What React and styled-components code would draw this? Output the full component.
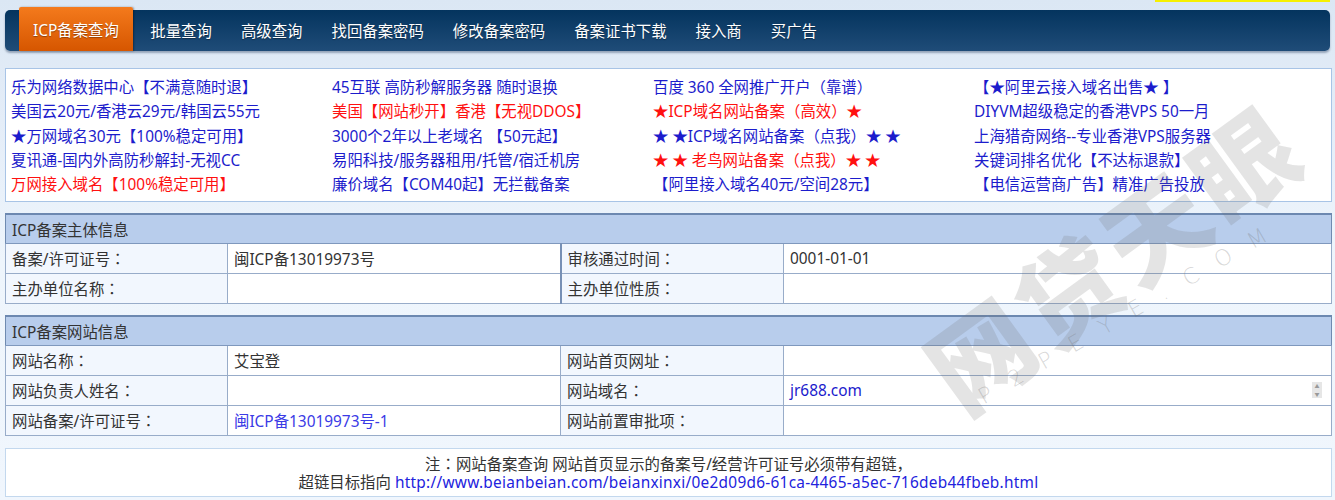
import React from 'react';
import styled, { createGlobalStyle } from 'styled-components';

const GlobalStyle = createGlobalStyle`
  html, body {
    margin: 0;
    padding: 0;
  }
  body {
    background: linear-gradient(#dbe7f4 0px, #e4edf8 120px, #eef5fc 260px, #f0f6fd 100%);
    font-family: "Noto Sans", "Noto Sans CJK SC", sans-serif;
    font-size: 15.4px;
    color: #333;
  }
`;

const Page = styled.div`
  position: relative;
  padding: 0 3px 5px 5px;
  height: 500px;
  box-sizing: border-box;
  overflow: hidden;
`;

const TopStrip = styled.div`
  height: 2px;
  display: flex;
  justify-content: flex-end;
  padding-right: 2px;
  & > span {
    width: 175px;
    background: #f6f000;
  }
`;

const NavBar = styled.nav`
  margin-top: 8px;
  height: 41px;
  margin-right: 2px;
  border-radius: 5px;
  background: linear-gradient(#04345e, #1f4c78);
  box-shadow: 0 2px 2px rgba(60, 80, 110, 0.45);
  display: flex;
  align-items: stretch;
  padding-left: 14px;
`;

const NavItem = styled.a`
  display: flex;
  align-items: center;
  padding: 0 14.5px;
  color: #fff;
  font-size: 15.4px;
  text-decoration: none;
  white-space: nowrap;
  text-shadow: 0 1px 1px rgba(0, 0, 0, 0.35);
  ${({ $active }) =>
    $active &&
    `
    margin-top: -3px;
    padding: 0 14px;
    background: linear-gradient(#f47a1c, #d65600);
    border-radius: 2px 2px 0 0;
    box-shadow: 1px 0 2px rgba(0,0,0,0.35);
    margin-right: 3px;
  `}
`;

const AdBox = styled.div`
  margin-top: 17px;
  background: #fff;
  border: 1px solid #a8c4e6;
  padding: 7px 0 4px 5px;
  display: grid;
  grid-template-columns: repeat(4, 321px);
  grid-auto-flow: column;
  grid-template-rows: repeat(5, 24.3px);
`;

const AdLink = styled.a`
  color: ${({ $red }) => ($red ? '#ff1010' : '#1c1ccc')};
  text-decoration: none;
  font-size: 15.4px;
  line-height: 24.3px;
  white-space: nowrap;
`;

const InfoTable = styled.table`
  width: 100%;
  border-collapse: collapse;
  margin-top: ${({ $gap }) => $gap}px;
  background: #fff;
  border: 1px solid #6f8ab0;
  table-layout: fixed;
`;

const HeadCell = styled.th`
  background: #b8cdec;
  text-align: left;
  font-weight: normal;
  height: 28px;
  padding: 0 6px;
  color: #333;
  border-top: 2px solid #6c88b0;
  border-bottom: 1px solid #7f98bd;
`;

const LabelCell = styled.td`
  background: #f2f7fe;
  height: 29px;
  padding: 0 6px;
  border: 1px solid #98acc9;
  border-left: ${({ $strong }) => ($strong ? '2px solid #7790b5' : '1px solid #98acc9')};
  color: #333;
  white-space: nowrap;
`;

const ValueCell = styled.td`
  background: #fff;
  height: 29px;
  padding: 0 6px;
  border: 1px solid #98acc9;
  color: #333;
  white-space: nowrap;
  position: relative;
`;

const Colon = styled.span`
  font-family: "Noto Sans CJK TC", sans-serif;
  line-height: 1;
`;

const BlueText = styled.span`
  color: ${({ $dark }) => ($dark ? '#1a1acc' : '#3b3be6')};
`;

const Spinner = styled.span`
  position: absolute;
  right: 9px;
  top: 6px;
  width: 10px;
  height: 16px;
  background: #e6e6e6;
  font-size: 5px;
  line-height: 8px;
  text-align: center;
  color: #999;
`;

const NoteBox = styled.div`
  margin-top: 12px;
  background: #fff;
  border: 1px solid #c3d8ee;
  text-align: center;
  padding: 7px 0 4px;
  line-height: 18px;
  font-size: 15.4px;
  color: #333;
`;

const NoteLink = styled.a`
  color: #2222dd;
  text-decoration: none;
  letter-spacing: 0.27px;
`;

const Watermark = styled.div`
  position: absolute;
  left: ${({ $x }) => $x}px;
  top: ${({ $y }) => $y}px;
  transform: translate(-50%, -50%) rotate(${({ $deg }) => $deg}deg);
  white-space: nowrap;
  pointer-events: none;
  line-height: 1;
  color: rgba(110, 110, 110, 0.19);
`;

const MarkBig = styled.span`
  font-family: "Noto Sans CJK SC", sans-serif;
  font-weight: 900;
  font-size: 102px;
  letter-spacing: 6px;
`;

const MarkSmall = styled.span`
  font-family: "DejaVu Sans", sans-serif;
  font-weight: 200;
  font-size: 22px;
  letter-spacing: 21px;
  color: rgba(110, 110, 110, 0.27);
`;

const navItems = ['ICP备案查询', '批量查询', '高级查询', '找回备案密码', '修改备案密码', '备案证书下载', '接入商', '买广告'];

const ads = [
  ['乐为网络数据中心【不满意随时退】', false],
  ['美国云20元/香港云29元/韩国云55元', false],
  ['★万网域名30元【100%稳定可用】', false],
  ['夏讯通-国内外高防秒解封-无视CC', false],
  ['万网接入域名【100%稳定可用】', true],
  ['45互联 高防秒解服务器 随时退换', false],
  ['美国【网站秒开】香港【无视DDOS】', true],
  ['3000个2年以上老域名 【50元起】', false],
  ['易阳科技/服务器租用/托管/宿迁机房', false],
  ['廉价域名【COM40起】无拦截备案', false],
  ['百度 360 全网推广开户（靠谱）', false],
  ['★ICP域名网站备案（高效）★', true],
  ['★ ★ICP域名网站备案（点我）★ ★', false],
  ['★ ★ 老鸟网站备案（点我）★ ★', true],
  ['【阿里接入域名40元/空间28元】', false],
  ['【★阿里云接入域名出售★ 】', false],
  ['DIYVM超级稳定的香港VPS 50一月', false],
  ['上海猎奇网络--专业香港VPS服务器', false],
  ['关键词排名优化【不达标退款】', false],
  ['【电信运营商广告】精准广告投放', false],
];

function Cols() {
  return (
    <colgroup>
      <col style={{ width: 222 }} />
      <col style={{ width: 333 }} />
      <col style={{ width: 223 }} />
      <col />
    </colgroup>
  );
}

function Label({ children, strong }) {
  return (
    <LabelCell $strong={strong}>
      {children}
      <Colon>：</Colon>
    </LabelCell>
  );
}

export default function App() {
  return (
    <>
      <GlobalStyle />
      <Page>
        <TopStrip>
          <span />
        </TopStrip>
        <NavBar>
          {navItems.map((item, i) => (
            <NavItem key={item} $active={i === 0}>
              {item}
            </NavItem>
          ))}
        </NavBar>

        <AdBox>
          {ads.map(([text, red]) => (
            <AdLink key={text} $red={red}>
              {text}
            </AdLink>
          ))}
        </AdBox>

        <InfoTable $gap={11}>
          <Cols />
          <thead>
            <tr>
              <HeadCell colSpan={4}>ICP备案主体信息</HeadCell>
            </tr>
          </thead>
          <tbody>
            <tr>
              <Label>备案/许可证号</Label>
              <ValueCell>闽ICP备13019973号</ValueCell>
              <Label strong>审核通过时间</Label>
              <ValueCell>0001-01-01</ValueCell>
            </tr>
            <tr>
              <Label>主办单位名称</Label>
              <ValueCell />
              <Label strong>主办单位性质</Label>
              <ValueCell />
            </tr>
          </tbody>
        </InfoTable>

        <InfoTable $gap={11}>
          <Cols />
          <thead>
            <tr>
              <HeadCell colSpan={4}>ICP备案网站信息</HeadCell>
            </tr>
          </thead>
          <tbody>
            <tr>
              <Label>网站名称</Label>
              <ValueCell>艾宝登</ValueCell>
              <Label>网站首页网址</Label>
              <ValueCell />
            </tr>
            <tr>
              <Label>网站负责人姓名</Label>
              <ValueCell />
              <Label>网站域名</Label>
              <ValueCell>
                <BlueText $dark>jr688.com</BlueText>
                <Spinner>▲<br />▼</Spinner>
              </ValueCell>
            </tr>
            <tr>
              <Label>网站备案/许可证号</Label>
              <ValueCell>
                <BlueText>闽ICP备13019973号-1</BlueText>
              </ValueCell>
              <Label>网站前置审批项</Label>
              <ValueCell />
            </tr>
          </tbody>
        </InfoTable>

        <NoteBox>
          注<Colon>：</Colon>网站备案查询 网站首页显示的备案号/经营许可证号必须带有超链，
          <br />
          超链目标指向{' '}
          <NoteLink>http://www.beianbeian.com/beianxinxi/0e2d09d6-61ca-4465-a5ec-716deb44fbeb.html</NoteLink>
        </NoteBox>

        <Watermark $x={1112} $y={255} $deg={-36}>
          <MarkBig>网贷天眼</MarkBig>
        </Watermark>
        <Watermark $x={1132} $y={311} $deg={-30}>
          <MarkSmall>P2PEYE.COM</MarkSmall>
        </Watermark>
      </Page>
    </>
  );
}
